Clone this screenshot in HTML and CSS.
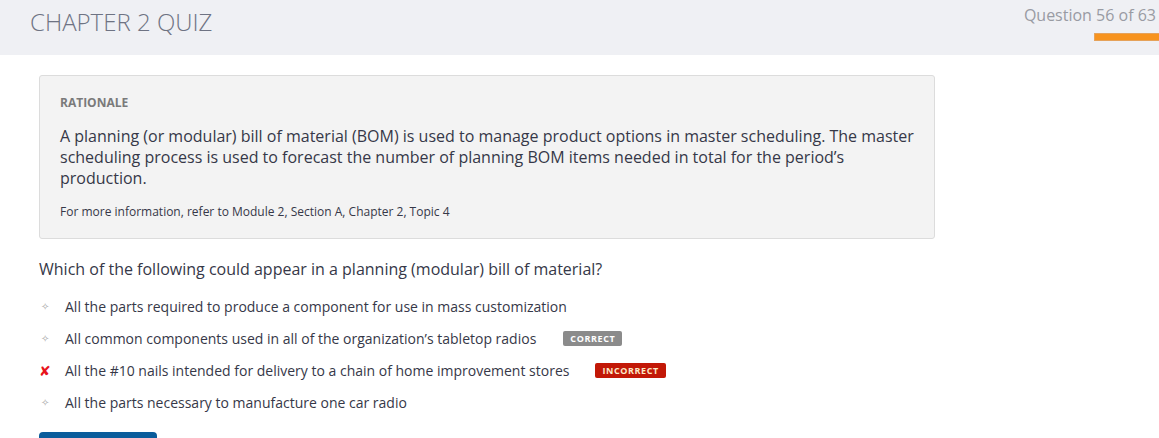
FILE: index.html
```html
<!DOCTYPE html>
<html>
<head>
<meta charset="utf-8">
<link rel="stylesheet" href="styles.css">
</head>
<body>
<header class="topbar">
  <h1 class="title">CHAPTER 2 QUIZ</h1>
  <div class="progress">
    <div class="progress-label">Question 56 of 63</div>
    <div class="progress-bar"></div>
  </div>
</header>
<main class="content">
  <section class="rationale">
    <h2 class="rationale-head">RATIONALE</h2>
    <p class="rationale-text">A planning (or modular) bill of material (BOM) is used to manage product options in master scheduling. The master scheduling process is used to forecast the number of planning BOM items needed in total for the period’s production.</p>
    <p class="rationale-ref">For more information, refer to Module 2, Section A, Chapter 2, Topic 4</p>
  </section>
  <p class="question">Which of the following could appear in a planning (modular) bill of material?</p>
  <ul class="options">
    <li class="option"><span class="mark dot">✧</span><span class="opt-text">All the parts required to produce a component for use in mass customization</span></li>
    <li class="option"><span class="mark dot">✧</span><span class="opt-text">All common components used in all of the organization’s tabletop radios</span><span class="badge badge-correct">CORRECT</span></li>
    <li class="option"><span class="mark cross">✘</span><span class="opt-text">All the #10 nails intended for delivery to a chain of home improvement stores</span><span class="badge badge-incorrect">INCORRECT</span></li>
    <li class="option"><span class="mark dot">✧</span><span class="opt-text">All the parts necessary to manufacture one car radio</span></li>
  </ul>
  <div class="button-row"><button class="next-btn" aria-label="Next"></button></div>
</main>
</body>
</html>
```
FILE: styles.css
```css
* { box-sizing: border-box; }
html, body { margin: 0; padding: 0; }
body {
  font-family: "Open Sans", "Liberation Sans", sans-serif;
  background: #fff;
  color: #363848;
  width: 1159px;
  height: 438px;
  overflow: hidden;
}
.topbar {
  height: 55px;
  background: #eff0f4;
  display: flex;
  justify-content: space-between;
  align-items: flex-start;
}
.title {
  margin: 6px 0 0 30px;
  font-weight: 300;
  font-size: 24px;
  line-height: 32px;
  color: #6e7383;
}
.progress {
  display: flex;
  flex-direction: column;
  align-items: flex-end;
  padding-top: 5px;
}
.progress-label {
  font-size: 16px;
  line-height: 21px;
  color: #999ba3;
  padding-right: 3px;
}
.progress-bar {
  margin-top: 7px;
  width: 65px;
  height: 8px;
  background: #f7931e;
  border: 1px solid #e5a25a;
  border-right: none;
  border-radius: 1px 0 0 1px;
}
.content {
  padding: 20px 0 0 39px;
}
.rationale {
  width: 896px;
  height: 164px;
  background: #f3f3f3;
  border: 1px solid #dcdcdc;
  border-radius: 3px;
  padding: 19px 20px 0 20px;
}
.rationale-head {
  margin: 0;
  font-size: 12px;
  font-weight: 700;
  line-height: 16px;
  color: #7a7a7a;
}
.rationale-text {
  margin: 15px 0 0 0;
  font-size: 16px;
  line-height: 21px;
}
.rationale-ref {
  margin: 15px 0 0 0;
  font-size: 12px;
  line-height: 16px;
}
.question {
  margin: 19px 0 0 0;
  font-size: 16px;
  line-height: 22px;
}
.options {
  list-style: none;
  margin: 10px 0 0 0;
  padding: 0;
}
.option {
  display: flex;
  align-items: center;
  height: 32px;
  font-size: 14px;
}
.mark {
  width: 26px;
  padding-left: 2px;
  flex: none;
}
.dot {
  font-size: 10px;
  color: #aaaaaa;
}
.cross {
  font-size: 14px;
  color: #e8141c;
  padding-left: 0;
}
.badge {
  display: inline-block;
  font-size: 9px;
  font-weight: 700;
  letter-spacing: 0.6px;
  color: #fff;
  line-height: 15px;
  height: 15px;
  padding: 0 7px;
  border-radius: 2px;
  margin-left: 27px;
}
.badge-correct { background: #8b8b8b; }
.badge-incorrect { background: #c21807; margin-left: 26px; color: #fde9c8; }
.button-row { margin-top: 14px; }
.next-btn {
  display: block;
  width: 118px;
  height: 40px;
  background: #0a5c9b;
  border: none;
  border-radius: 4px;
  padding: 0;
}
```
